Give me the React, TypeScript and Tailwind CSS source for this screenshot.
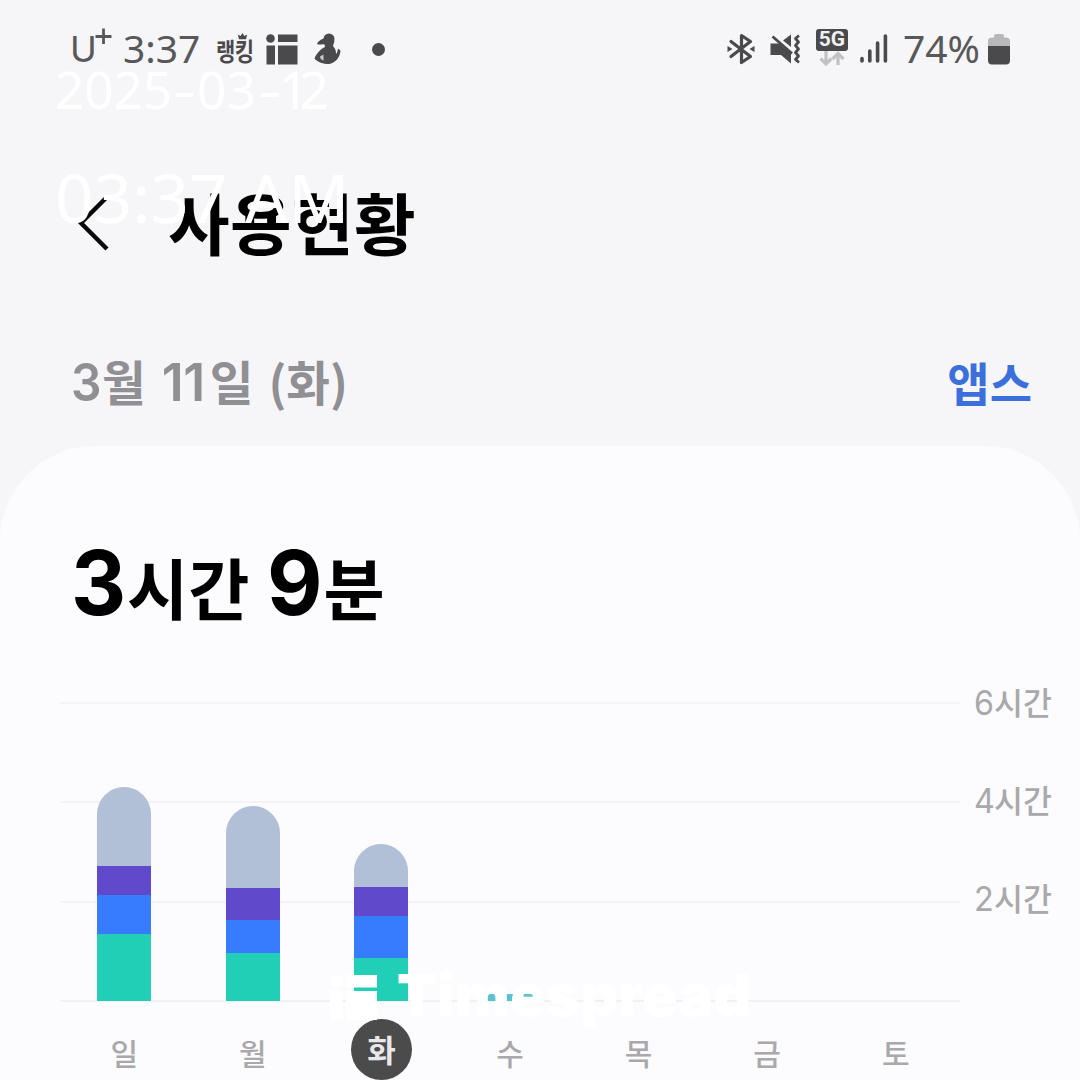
import React from "react";

type Segment = { height: number; color: string };
type Day = { label: string; segments: Segment[]; selected?: boolean };

const GREY = "#b1bfd7";
const PURPLE = "#6149cb";
const BLUE = "#377cfe";
const GREEN = "#20cfb5";

const days: Day[] = [
  {
    label: "일",
    segments: [
      { height: 79, color: GREY },
      { height: 29, color: PURPLE },
      { height: 38.5, color: BLUE },
      { height: 67, color: GREEN },
    ],
  },
  {
    label: "월",
    segments: [
      { height: 81.5, color: GREY },
      { height: 32.5, color: PURPLE },
      { height: 32.5, color: BLUE },
      { height: 48, color: GREEN },
    ],
  },
  {
    label: "화",
    selected: true,
    segments: [
      { height: 42.5, color: GREY },
      { height: 29, color: PURPLE },
      { height: 42, color: BLUE },
      { height: 43, color: GREEN },
    ],
  },
  { label: "수", segments: [{ height: 7, color: "#5cc3cc" }] },
  { label: "목", segments: [] },
  { label: "금", segments: [] },
  { label: "토", segments: [] },
];

function AppGridIcon() {
  return (
    <svg className="ml-[12px] h-[31px] w-[32px]" viewBox="0 0 32 31" fill="#4a4a4c">
      <circle cx="4.5" cy="4.5" r="4.3" />
      <rect x="12" y="0.5" width="19.5" height="7.5" />
      <rect x="0.5" y="11.5" width="8.5" height="19" />
      <rect x="12" y="11.5" width="19.5" height="19" />
    </svg>
  );
}

function FigureIcon() {
  return (
    <svg className="ml-[16px] h-[32px] w-[28px]" viewBox="0 0 28 32" fill="#4a4a4c">
      <circle cx="15" cy="6" r="5.5" />
      <path d="M13 4.5 C8 5.5 4 8 3 11 C6 12.5 8.5 10.5 10.5 11.5 L11 14 C7 16 2.5 20 0.5 25.5 C4 29.5 9 31 15 31 C21 30 26 25 26.5 17.5 L24 15.5 C23.5 18.5 23 20 22 21 C22 18 21.5 15.5 19 13 L20.5 8 Z" />
      <path d="M6 23.5 L9.5 21.5 V27.5 C7.5 27 6 25.5 6 23.5 Z" fill="#c9c9cc" />
    </svg>
  );
}

function RankingBadge() {
  return (
    <div className="relative ml-[15px] h-[30px] w-[38px] font-bold text-[#4a4a4c]">
      <span className="block origin-left scale-y-[1.18] text-[21px] leading-[32px] tracking-[-0.5px]">랭킹</span>
      <svg className="absolute left-[21px] -top-[1px] h-[7px] w-[11px]" viewBox="0 0 12 9" fill="#4a4a4c">
        <path d="M0 2 L3.5 4 L6 0 L8.5 4 L12 2 L10.5 8 H1.5 Z" />
      </svg>
    </div>
  );
}

function BluetoothIcon() {
  return (
    <svg className="h-[32px] w-[28px]" viewBox="0 0 28 32" fill="none" stroke="#4a4a4c" strokeWidth="3.2" strokeLinejoin="round" strokeLinecap="round">
      <path d="M4 8.5 L23.5 23.5 L14.5 29.5 V2.5 L23.5 8.5 L4 23.5" />
      <path d="M0.5 13 L5.5 16 L0.5 19 Z M27.5 13 L22.5 16 L27.5 19 Z" fill="#4a4a4c" stroke="none" />
    </svg>
  );
}

function MutedIcon() {
  return (
    <svg className="ml-[15px] h-[30px] w-[31px]" viewBox="0 0 31 30">
      <path d="M0.5 9.5 H9 L21 19.5 V29.5 L11 21 H0.5 Z" fill="#4a4a4c" />
      <path d="M13 6.5 L21 0.5 V13 Z" fill="#4a4a4c" />
      <path d="M2.5 2.5 L22 19.5" stroke="#4a4a4c" strokeWidth="2.8" />
      <path d="M29 1.5 L25.5 4.5 L28.5 8 L25.5 11.5 L28.5 15 L25.5 18.5 L28.5 22 L25.5 25.5 L29 28.5" fill="none" stroke="#4a4a4c" strokeWidth="2.8" strokeLinejoin="round" />
    </svg>
  );
}

function NetworkIcon() {
  return (
    <div className="ml-[15px] flex w-[32px] flex-col items-center">
      <div className="flex h-[22px] w-[32px] items-center justify-center rounded-[3px] bg-[#4a4a4c]">
        <span className="font-['Roboto'] text-[21px] leading-none font-bold text-[#f0f0f2]">5G</span>
      </div>
      <svg className="h-[15px] w-[26px]" viewBox="0 0 26 15" fill="none" stroke="#c2c2c5" strokeWidth="3.2">
        <path d="M7 0 V13 M1.5 7.5 L7 13 L12.5 7.5" />
        <path d="M19 14 V3 M13.5 8 L19 2.5 L24.5 8" />
      </svg>
    </div>
  );
}

function SignalIcon() {
  return (
    <svg className="ml-[11px] h-[30px] w-[29px]" viewBox="0 0 29 30" stroke="#4a4a4c" strokeWidth="3.6" strokeLinecap="round">
      <path d="M3 24.5 V27 M10.8 17 V27 M18.6 9 V27 M26.4 2 V27" />
    </svg>
  );
}

function BatteryIcon() {
  return (
    <svg className="ml-[6px] h-[32px] w-[22px]" viewBox="0 0 22 32">
      <path d="M6 3 Q6 1 8 1 H14 Q16 1 16 3 V4.5 H18 Q22 4.5 22 8 V14 H0 V8 Q0 4.5 4 4.5 H6 Z" fill="#b8b8ba" />
      <path d="M0 13 H22 V27.5 Q22 31.5 18 31.5 H4 Q0 31.5 0 27.5 Z" fill="#4a4a4c" />
    </svg>
  );
}

function StatusBar() {
  return (
    <div className="flex h-[98px] items-center justify-between pr-[70px] pl-[70px] text-[#58585a]">
      <div className="flex items-center">
        <div className="flex w-[53px] items-start font-['Inter']">
          <span className="w-[25px] text-[36px] leading-[46px]">U</span>
          <svg className="mt-[2px] h-[17px] w-[17px]" viewBox="0 0 17 17" stroke="#58585a" strokeWidth="2.8">
            <path d="M8.5 0.5 V16 M0.5 8.5 H16.5" />
          </svg>
        </div>
        <span className="-mt-[3px] w-[78px] font-['Noto_Sans'] text-[39px] leading-[40px]">3:37</span>
        <RankingBadge />
        <AppGridIcon />
        <FigureIcon />
        <span className="ml-[30px] size-[13px] rounded-full bg-[#4a4a4c]" />
      </div>
      <div className="flex items-center">
        <BluetoothIcon />
        <MutedIcon />
        <div className="-mt-[4px]">
          <NetworkIcon />
        </div>
        <SignalIcon />
        <span className="-mt-[3px] ml-[15px] w-[79px] font-['Noto_Sans'] text-[39px] leading-[40px]">74%</span>
        <BatteryIcon />
      </div>
    </div>
  );
}

function Header() {
  return (
    <header className="h-[446px]">
      <StatusBar />
      <div className="flex h-[254px] items-center pl-[76px]">
        <svg className="-mt-[4px] h-[56px] w-[34px]" viewBox="0 0 34 56" fill="none" stroke="#0a0a0a" strokeWidth="4.4">
          <path d="M31 2 L5 28 L31 54" />
        </svg>
        <h1 className="-mt-[10px] ml-[58px] text-[67px] leading-none font-bold tracking-[0.4px] text-black">사용현황</h1>
      </div>
      <div className="-mt-[3px] flex h-[64px] items-center justify-between pr-[48px] pl-[71px] font-bold">
        <div className="mt-[3px] flex items-baseline text-[47.5px] leading-none text-[#8f8f94]">
          <span className="w-[31px] font-['Inter'] text-[52px] font-semibold">
            <span className="inline-block origin-left scale-x-[0.92]">3</span>
          </span>
          <span>월</span>
          <span className="ml-[16px] w-[48px] font-['Inter'] text-[52px] font-semibold tracking-[-0.5px]">11</span>
          <span>일</span>
          <span className="ml-[15px]">(화)</span>
        </div>
        <span className="text-[46px] leading-none text-[#3b6fdc]">앱스</span>
      </div>
    </header>
  );
}

function Bar({ segments }: { segments: Segment[] }) {
  return (
    <div className="flex w-[54px] flex-col overflow-hidden rounded-t-[27px]">
      {segments.map((s, i) => (
        <div key={i} style={{ height: s.height, backgroundColor: s.color }} />
      ))}
    </div>
  );
}

function AxisLabel({ hours }: { hours: number }) {
  return (
    <div className="flex items-baseline">
      <span className="w-[20px] font-['Inter'] text-[34px]">
        <span className="inline-block origin-left scale-x-[0.95]">{hours}</span>
      </span>
      <span className="font-medium">시간</span>
    </div>
  );
}

function Chart() {
  return (
    <div className="flex pl-[60px]">
      <div className="w-[900px]">
        <div className="grid h-[300px]">
          <div className="col-start-1 row-start-1 flex flex-col justify-between">
            <div className="h-[2px] bg-[#f4f4f6]" />
            <div className="h-[2px] bg-[#f4f4f6]" />
            <div className="h-[2px] bg-[#f4f4f6]" />
            <div className="h-[2px] bg-[#f1f1f3]" />
          </div>
          <div className="col-start-1 row-start-1 grid grid-cols-7 items-end justify-items-center pb-[1.5px]">
            {days.map((d) => (
              <Bar key={d.label} segments={d.segments} />
            ))}
          </div>
        </div>
        <div className="mt-[16.5px] grid grid-cols-7 justify-items-center">
          {days.map((d) => (
            <div
              key={d.label}
              className={
                d.selected
                  ? "flex size-[61px] items-center justify-center rounded-full bg-[#4b4b4b] pb-[2px] text-[31px] leading-none font-bold text-[#e8e8e8]"
                  : "flex size-[61px] items-center justify-center pt-[5px] text-[30px] leading-none font-medium text-[#a9a9ab]"
              }
            >
              {d.label}
            </div>
          ))}
        </div>
      </div>
      <div className="-mt-[18px] ml-[14px] flex h-[232px] flex-col justify-between text-[31.5px] leading-[34px] text-[#a9a9ab]">
        <AxisLabel hours={6} />
        <AxisLabel hours={4} />
        <AxisLabel hours={2} />
      </div>
    </div>
  );
}

function Brand() {
  return (
    <div className="absolute top-[964px] left-[330px] flex items-center text-white">
      <svg className="mt-[4px] h-[48px] w-[48px]" viewBox="0 0 48 48" fill="currentColor">
        <circle cx="7" cy="7" r="6.6" />
        <rect x="16" y="1" width="31" height="12.5" />
        <rect x="0" y="17" width="12.5" height="29" />
        <rect x="16" y="17" width="31" height="29" />
      </svg>
      <span className="-mt-[2px] ml-[19px] font-['Inter'] text-[58px] leading-[66px] font-black tracking-[0.5px]">Timespread</span>
    </div>
  );
}

function Timestamp() {
  return (
    <>
      <div className="absolute top-[53px] left-[55px] flex font-['Noto_Sans'] text-[51.5px] leading-[72px] text-white">
        <span className="w-[118px] tracking-[-0.2px]">2025</span>
        <span className="w-[24px] origin-left scale-x-[1.4]">-</span>
        <span className="w-[61px]">03</span>
        <span className="w-[21px] origin-left scale-x-[1.4]">-</span>
        <span className="tracking-[-9px]">12</span>
      </div>
      <div className="absolute top-[151px] left-[55px] font-['Noto_Sans'] text-[67.5px] leading-[92px] text-white">03:37 AM</div>
    </>
  );
}

export default function App() {
  return (
    <div className="relative h-[1080px] w-[1080px] overflow-hidden bg-[#f6f6f8] font-['Noto_Sans_CJK_KR',sans-serif]">
      <Header />
      <main className="h-[634px] rounded-t-[95px] bg-[#fcfcfe]">
        <div className="flex h-[256px] items-baseline pt-[92px] pl-[71px] leading-none font-bold text-black">
          <span className="w-[56px] font-['Inter'] text-[90px] leading-[90px]">
            <span className="inline-block origin-left scale-x-[0.95]">3</span>
          </span>
          <span className="text-[66.5px]">시간</span>
          <span className="ml-[18px] w-[56px] font-['Inter'] text-[90px] leading-[90px]">
            <span className="inline-block origin-left scale-x-[0.95]">9</span>
          </span>
          <span className="text-[66.5px]">분</span>
        </div>
        <Chart />
      </main>
      <Timestamp />
      <Brand />
    </div>
  );
}
